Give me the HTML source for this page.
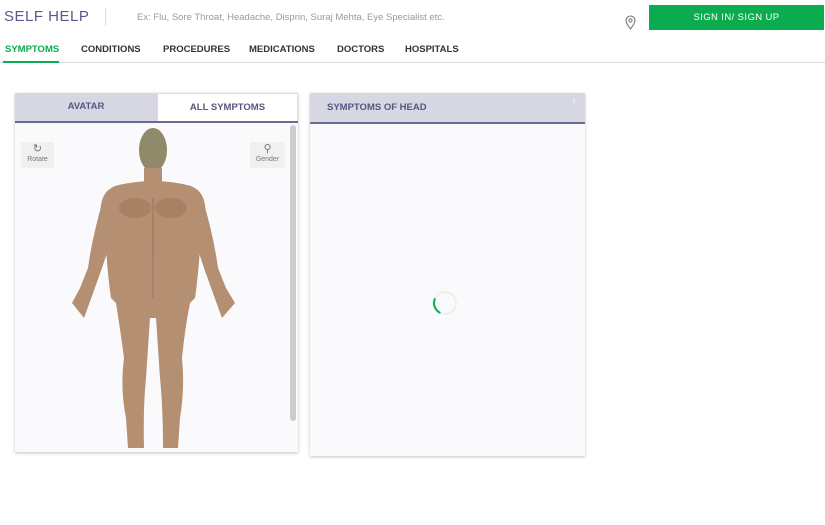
<!DOCTYPE html><html><head><style>
body{margin:0;width:825px;height:525px;background:#fff;font-family:"Liberation Sans",sans-serif;position:relative;overflow:hidden}
.a{position:absolute}
</style></head><body>
<div class="a" style="left:4px;top:8px;font-size:15px;color:#5a5890;letter-spacing:.5px">SELF HELP</div>
<div class="a" style="left:105px;top:8px;width:1px;height:18px;background:#ddd"></div>
<div class="a" style="left:137px;top:12px;font-size:9.5px;color:#999">Ex: Flu, Sore Throat, Headache, Disprin, Suraj Mehta, Eye Specialist etc.</div>
<svg class="a" style="left:625px;top:15px" width="11" height="15" viewBox="0 0 11 15"><path d="M5.5 14C2 9 1 7.5 1 5.5a4.5 4.5 0 0 1 9 0C10 7.5 9 9 5.5 14z" fill="none" stroke="#777" stroke-width="1.1"/><circle cx="5.5" cy="5.5" r="1.6" fill="none" stroke="#777"/></svg>
<div class="a" style="left:649px;top:5px;width:175px;height:25px;background:#0bab4f;color:#fff;font-size:9.5px;text-align:center;line-height:25px;letter-spacing:.4px">SIGN IN/ SIGN UP</div>
<div class="a" style="top:44px;left:0;font-size:9.5px;font-weight:bold;color:#333;width:825px">
<span class="a" style="left:5px;color:#0bab4f">SYMPTOMS</span><span class="a" style="left:81px">CONDITIONS</span><span class="a" style="left:163px">PROCEDURES</span><span class="a" style="left:249px">MEDICATIONS</span><span class="a" style="left:337px">DOCTORS</span><span class="a" style="left:405px">HOSPITALS</span></div>
<div class="a" style="left:0;top:62px;width:825px;height:1px;background:#ddd"></div>
<div class="a" style="left:3px;top:61px;width:56px;height:2px;background:#0bab4f"></div>

<div class="a" style="left:15px;top:93px;width:283px;height:359px;background:#fafafd;box-shadow:0 1px 3px rgba(0,0,0,.25)"></div>
<div class="a" style="left:15px;top:93px;width:142px;height:28px;background:#d7d7e3;color:#55557f;font-size:9.5px;font-weight:bold;text-align:center;line-height:28px">AVATAR</div>
<div class="a" style="left:157px;top:93px;width:141px;height:28px;background:#fff;color:#55557f;font-size:9.5px;font-weight:bold;text-align:center;line-height:28px;box-sizing:border-box;border:1px solid #ddd;border-bottom:none">ALL SYMPTOMS</div>
<div class="a" style="left:15px;top:121px;width:283px;height:2px;background:#6b6a95"></div>
<div class="a" style="left:290px;top:125px;width:6px;height:296px;background:#ccc;border-radius:3px"></div>
<div class="a" style="left:21px;top:142px;width:33px;height:26px;background:#f0f0f0;font-size:7px;color:#777;text-align:center"><div style="font-size:11px;line-height:14px">↻</div>Rotate</div>
<div class="a" style="left:250px;top:142px;width:35px;height:26px;background:#f0f0f0;font-size:7px;color:#777;text-align:center"><div style="font-size:11px;line-height:14px">⚲</div>Gender</div>
<svg class="a" style="left:60px;top:128px" width="190" height="324" viewBox="0 0 190 324">
<g fill="#b58f72">
<ellipse cx="93" cy="22" rx="14" ry="22" fill="#8f8a6a"/>
<rect x="84" y="40" width="18" height="18"/>
<path d="M55 58 Q93 48 131 58 Q148 65 145 90 L140 120 Q138 150 135 170 L130 175 Q125 200 122 230 Q125 260 120 290 L118 320 L103 320 Q103 280 100 250 L96 190 L90 190 L86 250 Q83 280 84 320 L68 320 L66 290 Q60 260 64 230 Q60 200 56 175 L51 170 Q48 150 46 120 L41 90 Q38 65 55 58z"/>
<path d="M43 72 Q32 110 28 140 L20 160 L12 175 L24 190 L32 168 L42 140 L52 110z"/>
<path d="M143 72 Q154 110 158 140 L166 160 L175 175 L162 190 L154 168 L144 140 L134 110z"/>
</g>
<g fill="#9c7559" opacity=".5"><rect x="92" y="70" width="2" height="100"/><ellipse cx="75" cy="80" rx="16" ry="10"/><ellipse cx="111" cy="80" rx="16" ry="10"/></g>
</svg>

<div class="a" style="left:310px;top:93px;width:275px;height:363px;background:#fafafd;box-shadow:0 1px 3px rgba(0,0,0,.25)"></div>
<div class="a" style="left:310px;top:93px;width:275px;height:29px;background:#d7d7e3;color:#55557f;font-size:9.5px;font-weight:bold;line-height:29px;box-sizing:border-box;padding-left:17px">SYMPTOMS OF HEAD<span style="position:absolute;right:8px;top:-6px;color:#fff;font-size:12px">↑</span></div>
<div class="a" style="left:310px;top:122px;width:275px;height:2px;background:#6b6a95"></div>
<div class="a" style="left:433px;top:291px;width:24px;height:24px;border-radius:50%;border:2px solid #eee;border-left-color:#0bab4f;box-sizing:border-box;transform:rotate(-20deg)"></div>
</body></html>
